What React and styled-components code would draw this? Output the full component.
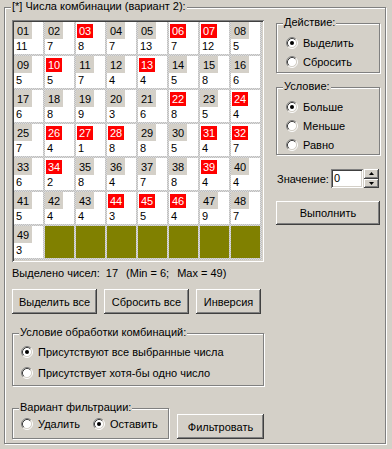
import React from 'react';
import styled, { createGlobalStyle } from 'styled-components';

const Global = createGlobalStyle`
  * { box-sizing: border-box; }
  html, body { margin: 0; padding: 0; background: #D4D0C8; }
  body {
    font-family: "Liberation Sans", Arial, sans-serif;
    font-size: 11px;
    color: #000;
    width: 392px;
    height: 449px;
    overflow: hidden;
  }
`;

const Window = styled.div`
  width: 392px;
  height: 449px;
  padding: 7px 0 0 4px;
  background: #D4D0C8;
`;

const Group = styled.div`
  position: relative;
  border: 1px solid #808080;
  box-shadow: inset 1px 1px #fff, 1px 1px #fff;
  width: ${p => p.$w}px;
  height: ${p => p.$h}px;
  padding: ${p => p.$pad || '0'};
  margin-top: ${p => p.$mt || 0}px;
  flex-shrink: 0;
`;

const Legend = styled.span`
  position: absolute;
  top: -8px;
  left: 6px;
  padding: 0 1px;
  background: #D4D0C8;
  line-height: 13px;
  white-space: nowrap;
`;

const Main = styled.div`
  display: flex;
  padding: 12px 0 0 7px;
`;

const LeftCol = styled.div`
  width: 252px;
  display: flex;
  flex-direction: column;
`;

const RightCol = styled.div`
  width: 104px;
  margin-left: 12px;
  margin-top: 3px;
  display: flex;
  flex-direction: column;
`;

const Board = styled.div`
  display: grid;
  grid-template-columns: repeat(8, 29px);
  grid-auto-rows: 32px;
  gap: 2px;
  width: 252px;
  height: 242px;
  padding: 2px 4px 4px 2px;
  background: repeating-conic-gradient(#BEBEBE 0 25%, #DCDCDC 0 50%) 0 0 / 2px 2px;
  box-shadow: inset 1px 1px #808080, inset -1px -1px #fff, inset 2px 2px #404040, inset -2px -2px #D4D0C8;
`;

const Cell = styled.div`
  background: ${p => (p.$empty ? '#808000' : '#fff')};
  display: flex;
  flex-direction: column;
`;

const NumSlot = styled.div`
  height: 17px;
`;

const Num = styled.span`
  display: block;
  text-align: center;
  width: ${p => (p.$sel ? 16 : 18)}px;
  height: ${p => (p.$sel ? 14 : 17)}px;
  padding-top: ${p => (p.$sel ? 1 : 2)}px;
  line-height: ${p => (p.$sel ? 13 : 15)}px;
  margin: ${p => (p.$sel ? '2px 0 0 1px' : '0')};
  background: ${p => (p.$sel ? '#FF0000' : '#D4D0C8')};
  color: ${p => (p.$sel ? '#fff' : '#000')};
`;

const Val = styled.div`
  padding-left: 2px;
  line-height: 14px;
`;

const Stats = styled.div`
  display: flex;
  margin-top: 5px;
  height: 13px;
  line-height: 13px;
  white-space: nowrap;
`;

const StatPart = styled.span`
  margin-left: ${p => p.$ml || 0}px;
`;

const ButtonRow = styled.div`
  display: flex;
  gap: 7px;
  margin-top: 9px;
`;

const Button = styled.button`
  font: inherit;
  color: #000;
  background: #D4D0C8;
  border: none;
  padding: 0;
  margin: 0;
  margin-top: ${p => p.$mt || 0}px;
  margin-left: ${p => (p.$auto ? 'auto' : '0')};
  width: ${p => p.$w}px;
  height: ${p => p.$h || 25}px;
  flex-shrink: 0;
  box-shadow: inset -1px -1px #404040, inset 1px 1px #fff, inset -2px -2px #808080, inset 2px 2px #D4D0C8;
`;

const RadioRow = styled.div`
  display: flex;
  align-items: center;
  height: ${p => p.$h || 19}px;
  gap: ${p => p.$gap || 0}px;
`;

const RadioItem = styled.label`
  display: flex;
  align-items: center;
  gap: 5px;
  white-space: nowrap;
`;

const BottomRow = styled.div`
  display: flex;
  align-items: flex-end;
  margin-top: 22px;
`;

const ValueRow = styled.div`
  display: flex;
  align-items: center;
  height: 19px;
  width: 103px;
  margin-top: 14px;
  padding-left: 1px;
`;

const Field = styled.div`
  margin-left: auto;
  width: 32px;
  height: 19px;
  background: #fff;
  padding: 2px 0 0 3px;
  line-height: 15px;
  box-shadow: inset 1px 1px #808080, inset -1px -1px #fff, inset 2px 2px #404040, inset -2px -2px #D4D0C8;
`;

const Spinner = styled.div`
  display: flex;
  flex-direction: column;
  width: 15px;
  height: 19px;
  margin-left: 1px;
`;

const SpinBtn = styled.div`
  flex: 1;
  display: flex;
  align-items: center;
  justify-content: center;
  background: #D4D0C8;
  box-shadow: inset -1px -1px #404040, inset 1px 1px #fff, inset -2px -2px #808080;
`;

const RadioIcon = ({ checked }) => (
  <svg width="12" height="12" viewBox="0 0 12 12" style={{ flexShrink: 0 }}>
    <circle cx="6" cy="6" r="4.5" fill="#fff" />
    <path d="M9.89 2.11A5.5 5.5 0 0 0 2.11 9.89" stroke="#808080" fill="none" />
    <path d="M2.11 9.89A5.5 5.5 0 0 0 9.89 2.11" stroke="#fff" fill="none" />
    <path d="M9.18 2.82A4.5 4.5 0 0 0 2.82 9.18" stroke="#404040" fill="none" />
    <path d="M2.82 9.18A4.5 4.5 0 0 0 9.18 2.82" stroke="#D4D0C8" fill="none" />
    {checked && <circle cx="6" cy="6" r="2" fill="#000" />}
  </svg>
);

const Radio = ({ checked, children }) => (
  <RadioItem>
    <RadioIcon checked={checked} />
    <span>{children}</span>
  </RadioItem>
);

const Arrow = ({ up }) => (
  <svg width="5" height="3" viewBox="0 0 5 3">
    <polygon points={up ? '0,3 5,3 2.5,0' : '0,0 5,0 2.5,3'} fill="#000" />
  </svg>
);

const data = [
  [1, 11], [2, 7], [3, 8, 1], [4, 7], [5, 13], [6, 7, 1], [7, 12, 1], [8, 5],
  [9, 5], [10, 5, 1], [11, 7], [12, 4], [13, 4, 1], [14, 5], [15, 8], [16, 6],
  [17, 6], [18, 8], [19, 9], [20, 3], [21, 6], [22, 8, 1], [23, 5], [24, 4, 1],
  [25, 7], [26, 4, 1], [27, 1, 1], [28, 8, 1], [29, 8], [30, 5], [31, 4, 1], [32, 7, 1],
  [33, 6], [34, 2, 1], [35, 8], [36, 4], [37, 7], [38, 8], [39, 4, 1], [40, 4],
  [41, 5], [42, 4], [43, 4], [44, 3, 1], [45, 5, 1], [46, 4, 1], [47, 9], [48, 7],
  [49, 3],
];

export default function App() {
  const cells = [...data];
  while (cells.length < 56) cells.push(null);
  return (
    <Window>
      <Global />
      <Group $w={382} $h={437}>
        <Legend>[*] Числа комбинации (вариант 2):</Legend>
        <Main>
          <LeftCol>
            <Board>
              {cells.map((c, i) =>
                c ? (
                  <Cell key={i}>
                    <NumSlot>
                      <Num $sel={!!c[2]}>{String(c[0]).padStart(2, '0')}</Num>
                    </NumSlot>
                    <Val>{c[1]}</Val>
                  </Cell>
                ) : (
                  <Cell key={i} $empty />
                )
              )}
            </Board>
            <Stats>
              <StatPart>Выделено чисел:</StatPart>
              <StatPart $ml={6}>17</StatPart>
              <StatPart $ml={8}>(Min = 6;</StatPart>
              <StatPart $ml={8}>Max = 49)</StatPart>
            </Stats>
            <ButtonRow>
              <Button $w={85}>Выделить все</Button>
              <Button $w={85}>Сбросить все</Button>
              <Button $w={65}>Инверсия</Button>
            </ButtonRow>
            <Group $w={252} $h={53} $mt={19} $pad="7px 0 0 8px">
              <Legend>Условие обработки комбинаций:</Legend>
              <RadioRow $h={21}>
                <Radio checked>Присутствуют все выбранные числа</Radio>
              </RadioRow>
              <RadioRow $h={21}>
                <Radio>Присутствует хотя-бы одно число</Radio>
              </RadioRow>
            </Group>
            <BottomRow>
              <Group $w={157} $h={31} $pad="5px 0 0 8px">
                <Legend>Вариант фильтрации:</Legend>
                <RadioRow $gap={13}>
                  <Radio>Удалить</Radio>
                  <Radio checked>Оставить</Radio>
                </RadioRow>
              </Group>
              <Button $w={87} $auto>Фильтровать</Button>
            </BottomRow>
          </LeftCol>
          <RightCol>
            <Group $w={104} $h={50} $pad="9px 0 0 9px">
              <Legend>Действие:</Legend>
              <RadioRow>
                <Radio checked>Выделить</Radio>
              </RadioRow>
              <RadioRow>
                <Radio>Сбросить</Radio>
              </RadioRow>
            </Group>
            <Group $w={104} $h={68} $mt={14} $pad="9px 0 0 9px">
              <Legend>Условие:</Legend>
              <RadioRow>
                <Radio checked>Больше</Radio>
              </RadioRow>
              <RadioRow>
                <Radio>Меньше</Radio>
              </RadioRow>
              <RadioRow>
                <Radio>Равно</Radio>
              </RadioRow>
            </Group>
            <ValueRow>
              <span>Значение:</span>
              <Field>0</Field>
              <Spinner>
                <SpinBtn><Arrow up /></SpinBtn>
                <SpinBtn><Arrow /></SpinBtn>
              </Spinner>
            </ValueRow>
            <Button $w={104} $h={24} $mt={13}>Выполнить</Button>
          </RightCol>
        </Main>
      </Group>
    </Window>
  );
}
